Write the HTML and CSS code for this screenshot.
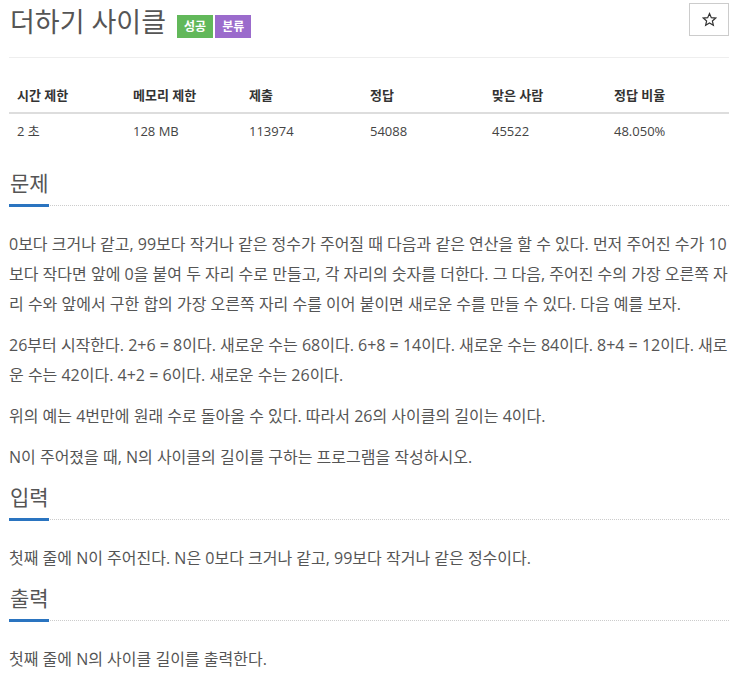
FILE: index.html
```html
<!DOCTYPE html>
<html lang="ko">
<head>
  <meta charset="UTF-8">
  <meta name="viewport" content="width=device-width,initial-scale=1.0">
  <title>더하기 사이클</title>
  <link rel="stylesheet" href="styles.css">
</head>
<body>
  <div class="container">
    <div class="page-header">
      <h1 id="problem_title">더하기 사이클</h1>
      <span class="label label-success">성공</span>
      <span class="label label-tag">분류</span>
      <button class="star-btn" type="button" title="즐겨찾기">
        <svg width="15" height="15" viewBox="0 0 24 24">
          <path d="M12 2.5l2.9 6.6 7.1.6-5.4 4.7 1.6 7-6.2-3.7-6.2 3.7 1.6-7L2 9.7l7.1-.6z" fill="none" stroke="#333" stroke-width="1.9" stroke-linejoin="miter"/>
        </svg>
      </button>
    </div>

    <table class="table" id="problem-info">
      <thead>
        <tr>
          <th class="c1">시간 제한</th>
          <th class="c2">메모리 제한</th>
          <th class="c3">제출</th>
          <th class="c4">정답</th>
          <th class="c5">맞은 사람</th>
          <th class="c6">정답 비율</th>
        </tr>
      </thead>
      <tbody>
        <tr>
          <td>2 초 </td>
          <td>128 MB</td>
          <td>113974</td>
          <td>54088</td>
          <td>45522</td>
          <td>48.050%</td>
        </tr>
      </tbody>
    </table>

    <section class="problem-section">
      <div class="headline"><h2>문제</h2></div>
      <div class="problem-text">
        <p>0보다 크거나 같고, 99보다 작거나 같은 정수가 주어질 때 다음과 같은 연산을 할 수 있다. 먼저 주어진 수가 10보다 작다면 앞에 0을 붙여 두 자리 수로 만들고, 각 자리의 숫자를 더한다. 그 다음, 주어진 수의 가장 오른쪽 자리 수와 앞에서 구한 합의 가장 오른쪽 자리 수를 이어 붙이면 새로운 수를 만들 수 있다. 다음 예를 보자.</p>
        <p>26부터 시작한다. 2+6 = 8이다. 새로운 수는 68이다. 6+8 = 14이다. 새로운 수는 84이다. 8+4 = 12이다. 새로운 수는 42이다. 4+2 = 6이다. 새로운 수는 26이다.</p>
        <p>위의 예는 4번만에 원래 수로 돌아올 수 있다. 따라서 26의 사이클의 길이는 4이다.</p>
        <p>N이 주어졌을 때, N의 사이클의 길이를 구하는 프로그램을 작성하시오.</p>
      </div>
    </section>

    <section class="problem-section">
      <div class="headline"><h2>입력</h2></div>
      <div class="problem-text">
        <p>첫째 줄에 N이 주어진다. N은 0보다 크거나 같고, 99보다 작거나 같은 정수이다.</p>
      </div>
    </section>

    <section class="problem-section">
      <div class="headline"><h2>출력</h2></div>
      <div class="problem-text">
        <p>첫째 줄에 N의 사이클 길이를 출력한다.</p>
      </div>
    </section>
  </div>
</body>
</html>
```

FILE: styles.css
```css
body {
  margin: 0;
  font-family: "Open Sans", "Noto Sans CJK KR", sans-serif;
  color: #555;
  background: #fff;
}

.container {
  padding: 0 8px 0 9px;
}

/* title row */
.page-header {
  display: flex;
  align-items: flex-start;
  padding-bottom: 13px;
  border-bottom: 1px solid #eee;
  margin-bottom: 20px;
}

.page-header h1 {
  margin: 0 11px 0 1px;
  font-size: 27px;
  font-weight: 400;
  line-height: 44px;
  color: #555;
}

.label {
  margin-top: 15px;
  margin-right: 2px;
  padding: 0 7px;
  height: 23px;
  line-height: 23px;
  font-size: 12px;
  font-weight: 700;
  color: #fff;
}

.label-success {
  background: #62b85a;
}

.label-tag {
  background: #9b6bcc;
}

.star-btn {
  margin: 3px 0 0 auto;
  width: 40px;
  height: 33px;
  padding: 0;
  background: #fff;
  border: 1px solid #ccc;
  display: flex;
  align-items: center;
  justify-content: center;
}

/* info table */
.table {
  width: 100%;
  border-collapse: collapse;
  margin-bottom: 19px;
  font-size: 13px;
}

.table th,
.table td {
  text-align: left;
  padding: 8px;
  line-height: 18px;
}

.table th {
  color: #333;
  font-weight: 700;
  border-bottom: 2px solid #ddd;
}

.table td {
  color: #444;
}

.table .c1 { width: 100px; }
.table .c2 { width: 100px; }
.table .c3 { width: 105px; }
.table .c4 { width: 106px; }
.table .c5 { width: 106px; }

/* sections */
.headline {
  border-bottom: 1px dotted #ccc;
  margin-bottom: 23px;
}

.headline h2 {
  display: inline-block;
  margin: 0 0 -2px;
  padding: 0 0 5px 1px;
  font-size: 21px;
  font-weight: 400;
  line-height: 32px;
  color: #555;
  border-bottom: 3px solid #2a74c0;
}

.problem-text p {
  margin: 0 0 11px;
  font-size: 16px;
  line-height: 30px;
}

.problem-text p:last-child {
  margin-bottom: 9px;
}
```
